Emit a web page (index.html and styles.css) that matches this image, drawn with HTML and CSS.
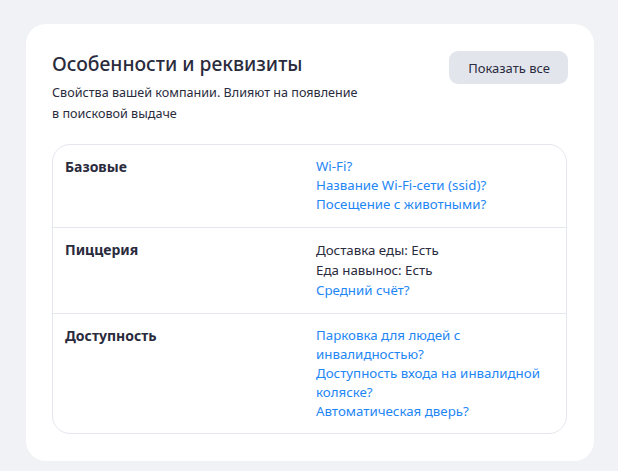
FILE: index.html
```html
<!DOCTYPE html>
<html lang="ru">
<head>
    <meta charset="UTF-8">
    <meta name="viewport" content="width=device-width, initial-scale=1.0">
    <title>Особенности и реквизиты</title>
    <link rel="stylesheet" href="styles.css">
</head>
<body>
    <section class="card">
        <div class="card-head">
            <div>
                <h2 class="card-title">Особенности и реквизиты</h2>
                <p class="card-desc">Свойства вашей компании. Влияют на появление<br>в поисковой выдаче</p>
            </div>
            <button class="btn-show">Показать все</button>
        </div>

        <div class="features">
            <div class="feature-row">
                <div class="feature-name">Базовые</div>
                <ul class="feature-list">
                    <li><a href="#">Wi-Fi?</a></li>
                    <li><a href="#">Название Wi-Fi-сети (ssid)?</a></li>
                    <li><a href="#">Посещение с животными?</a></li>
                </ul>
            </div>
            <div class="feature-row">
                <div class="feature-name">Пиццерия</div>
                <ul class="feature-list">
                    <li class="plain">Доставка еды: Есть</li>
                    <li class="plain">Еда навынос: Есть</li>
                    <li class="plain"><a href="#">Средний счёт?</a></li>
                </ul>
            </div>
            <div class="feature-row">
                <div class="feature-name">Доступность</div>
                <ul class="feature-list">
                    <li><a href="#">Парковка для людей с инвалидностью?</a></li>
                    <li><a href="#">Доступность входа на инвалидной коляске?</a></li>
                    <li><a href="#">Автоматическая дверь?</a></li>
                </ul>
            </div>
        </div>
    </section>
</body>
</html>
```

FILE: styles.css
```css
body {
    margin: 0;
    padding: 24px 24px 11px 26px;
    background: #f1f2f5;
    font-family: "Noto Sans", "Open Sans", sans-serif;
    color: #2a2b3d;
}
.card {
    width: 568px;
    box-sizing: border-box;
    background: white;
    border-radius: 20px;
    padding: 27px 27px 27px 26px;
}
.card-head {
    display: flex;
    justify-content: space-between;
    align-items: flex-start;
}
.card-title {
    margin: 0;
    font-size: 19.3px;
    line-height: 26px;
    font-weight: 500;
}
.card-desc {
    margin: 5px 0 0;
    font-size: 12.6px;
    line-height: 21px;
}
.btn-show {
    font-family: inherit;
    font-size: 13px;
    color: #2a2b3d;
    background: #e3e5ec;
    border: none;
    border-radius: 9px;
    height: 33px;
    padding: 0 18px 0 19px;
    margin-right: -1px;
    cursor: pointer;
}
.features {
    margin-top: 20px;
    border: 1px solid #e5e7ee;
    border-radius: 18px;
}
.feature-row {
    display: grid;
    grid-template-columns: 251px 228px;
    padding: 12px 12px 13px;
    border-top: 1px solid #e5e7ee;
}
.feature-row:first-child {
    border-top: none;
}
.feature-row:last-child {
    padding-bottom: 12px;
}
.feature-name {
    font-size: 14px;
    font-weight: 700;
    line-height: 19px;
}
.feature-list {
    list-style: none;
    margin: 0;
    padding: 0;
    font-size: 13.3px;
    line-height: 19px;
}
.feature-list .plain {
    line-height: 20px;
}
.feature-list a {
    color: #1e86f5;
    text-decoration: none;
}
```
